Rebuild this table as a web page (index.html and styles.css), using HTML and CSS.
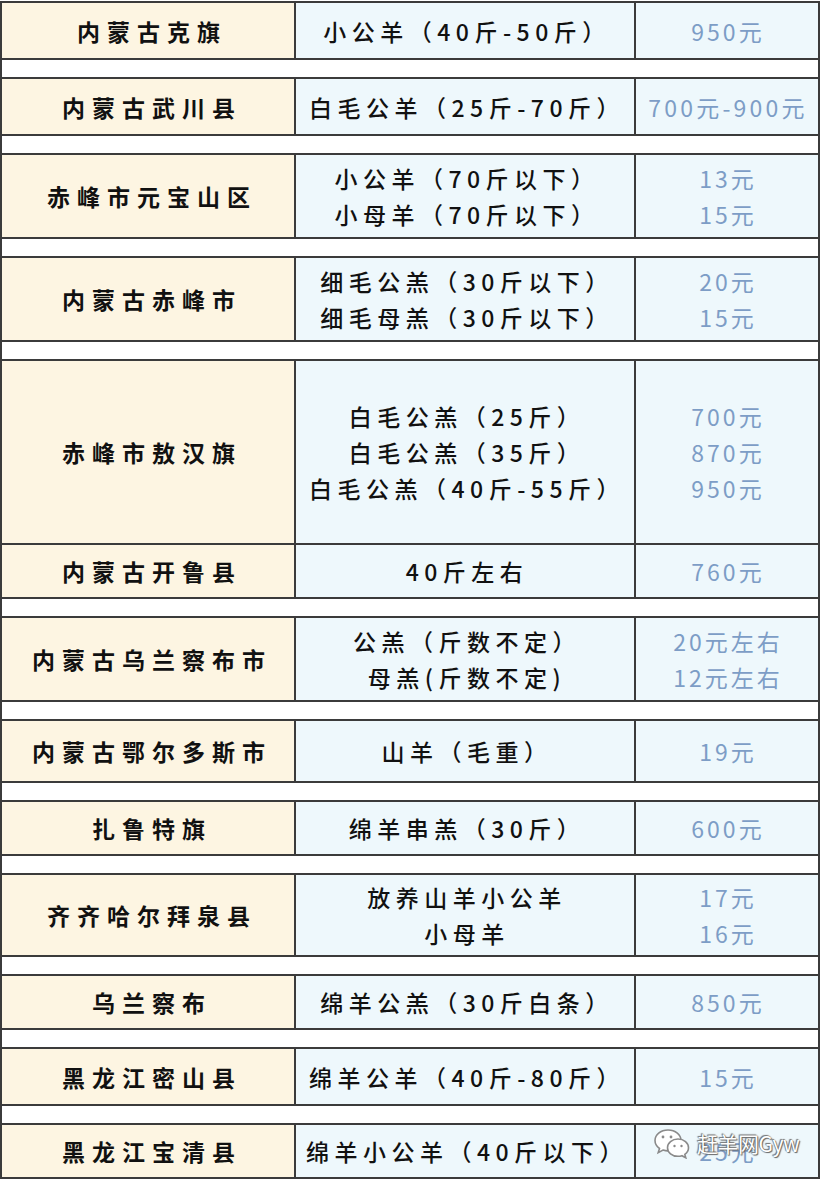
FILE: index.html
```html
<!DOCTYPE html>
<html lang="zh">
<head>
<meta charset="utf-8">
<title>羊价行情</title>
<link rel="stylesheet" href="styles.css">
</head>
<body>
<div class="wrap">
<table class="prices">
  <colgroup><col class="c1"><col class="c2"><col class="c3"></colgroup>
  <tr class="r1"><td class="area">内蒙古克旗</td><td class="kind">小公羊（40斤-50斤）</td><td class="price">950元</td></tr>
  <tr class="gap"><td colspan="3"></td></tr>
  <tr class="r1"><td class="area">内蒙古武川县</td><td class="kind">白毛公羊（25斤-70斤）</td><td class="price tight">700元-900元</td></tr>
  <tr class="gap"><td colspan="3"></td></tr>
  <tr class="r2"><td class="area">赤峰市元宝山区</td><td class="kind">小公羊（70斤以下）<br>小母羊（70斤以下）</td><td class="price">13元<br>15元</td></tr>
  <tr class="gap"><td colspan="3"></td></tr>
  <tr class="r2"><td class="area">内蒙古赤峰市</td><td class="kind">细毛公羔（30斤以下）<br>细毛母羔（30斤以下）</td><td class="price">20元<br>15元</td></tr>
  <tr class="gap"><td colspan="3"></td></tr>
  <tr class="r3"><td class="area">赤峰市敖汉旗</td><td class="kind">白毛公羔（25斤）<br>白毛公羔（35斤）<br>白毛公羔（40斤-55斤）</td><td class="price">700元<br>870元<br>950元</td></tr>
  <tr class="r1 low"><td class="area">内蒙古开鲁县</td><td class="kind">40斤左右</td><td class="price">760元</td></tr>
  <tr class="gap"><td colspan="3"></td></tr>
  <tr class="r2"><td class="area">内蒙古乌兰察布市</td><td class="kind">公羔（斤数不定）<br>母羔(斤数不定)</td><td class="price">20元左右<br>12元左右</td></tr>
  <tr class="gap"><td colspan="3"></td></tr>
  <tr class="r1 high"><td class="area">内蒙古鄂尔多斯市</td><td class="kind">山羊（毛重）</td><td class="price">19元</td></tr>
  <tr class="gap"><td colspan="3"></td></tr>
  <tr class="r1 low"><td class="area">扎鲁特旗</td><td class="kind">绵羊串羔（30斤）</td><td class="price">600元</td></tr>
  <tr class="gap"><td colspan="3"></td></tr>
  <tr class="r2 short"><td class="area">齐齐哈尔拜泉县</td><td class="kind">放养山羊小公羊<br>小母羊</td><td class="price">17元<br>16元</td></tr>
  <tr class="gap"><td colspan="3"></td></tr>
  <tr class="r1 low"><td class="area">乌兰察布</td><td class="kind">绵羊公羔（30斤白条）</td><td class="price">850元</td></tr>
  <tr class="gap"><td colspan="3"></td></tr>
  <tr class="r1"><td class="area">黑龙江密山县</td><td class="kind">绵羊公羊（40斤-80斤）</td><td class="price">15元</td></tr>
  <tr class="gap"><td colspan="3"></td></tr>
  <tr class="r1 low"><td class="area">黑龙江宝清县</td><td class="kind">绵羊小公羊（40斤以下）</td><td class="price">25元</td></tr>
</table>
<div class="mark">
  <svg class="wx" width="38" height="32" viewBox="0 0 38 32">
    <path d="M15 3C7.5 3 2 7.8 2 13.5c0 3.2 1.7 6 4.5 8l-1.3 4.2 4.8-2.6c1.6.5 3.2.8 5 .8 7.5 0 13-4.7 13-10.4S22.5 3 15 3z" fill="#fff" stroke="#8a8a8a" stroke-width="1.6"/>
    <path d="M25 12c-6 0-10.5 4-10.5 8.7s4.5 8.6 10.5 8.6c1.4 0 2.7-.2 3.9-.6l3.9 2.1-1-3.4c2.3-1.6 3.7-4 3.7-6.7C35.5 16 31 12 25 12z" fill="#fff" stroke="#8a8a8a" stroke-width="1.6"/>
    <circle cx="10" cy="10" r="1.4" fill="#8a8a8a"/>
    <circle cx="18" cy="10" r="1.4" fill="#8a8a8a"/>
    <circle cx="21.5" cy="19" r="1.2" fill="#8a8a8a"/>
    <circle cx="28.5" cy="19" r="1.2" fill="#8a8a8a"/>
  </svg>
  <span class="brand">赶羊网Gyw</span>
</div>
</div>
</body>
</html>
```
FILE: styles.css
```css
html, body {
  margin: 0;
  padding: 0;
  background: #ffffff;
}
.wrap {
  position: relative;
  width: 824px;
  height: 1182px;
  overflow: hidden;
  padding-top: 1px;
  box-sizing: border-box;
}
.prices {
  border-collapse: collapse;
  width: 818px;
  table-layout: fixed;
  font-family: "Noto Sans CJK SC", "Noto Sans", sans-serif;
  font-size: 23px;
  color: #111111;
}
.c1 { width: 294px; }
.c2 { width: 340px; }
.c3 { width: 184px; }
.prices td {
  border: 2.5px solid #3b3b3b;
  text-align: center;
  vertical-align: middle;
  padding: 0;
  line-height: 36px;
}
.area {
  background: #fdf5e2;
  letter-spacing: 7px;
  font-weight: 700;
}
.prices td.area { padding-left: 8px; }
.kind {
  background: #eef8fc;
  letter-spacing: 5.5px;
  font-weight: 500;
}
.prices td.kind { padding-left: 4px; }
.price {
  background: #eef8fc;
  color: #7d9dc6;
  letter-spacing: 3px;
}
.prices td.price { padding-left: 2px; }
.price.tight { letter-spacing: 3.2px; }
.r1 td { height: 55px; }
.r1.low td { height: 52px; }
.r1.high td { height: 60px; }
.r2 td { height: 82px; }
.r2.short td { height: 80px; }
.r3 td { height: 182px; }
.gap td {
  height: 17px;
  background: #ffffff;
  border-left: 2.5px solid #3b3b3b;
  border-right: 2.5px solid #3b3b3b;
}
.mark {
  position: absolute;
  left: 653px;
  top: 1127px;
  display: flex;
  align-items: center;
  gap: 6px;
}
.brand {
  font-family: "Noto Sans CJK SC", "Noto Sans", sans-serif;
  font-size: 21px;
  color: #ffffff;
  letter-spacing: -0.5px;
  text-shadow: 0 0 1px #555, 1px 1px 1px #666, -1px -1px 1px #777;
}
```
